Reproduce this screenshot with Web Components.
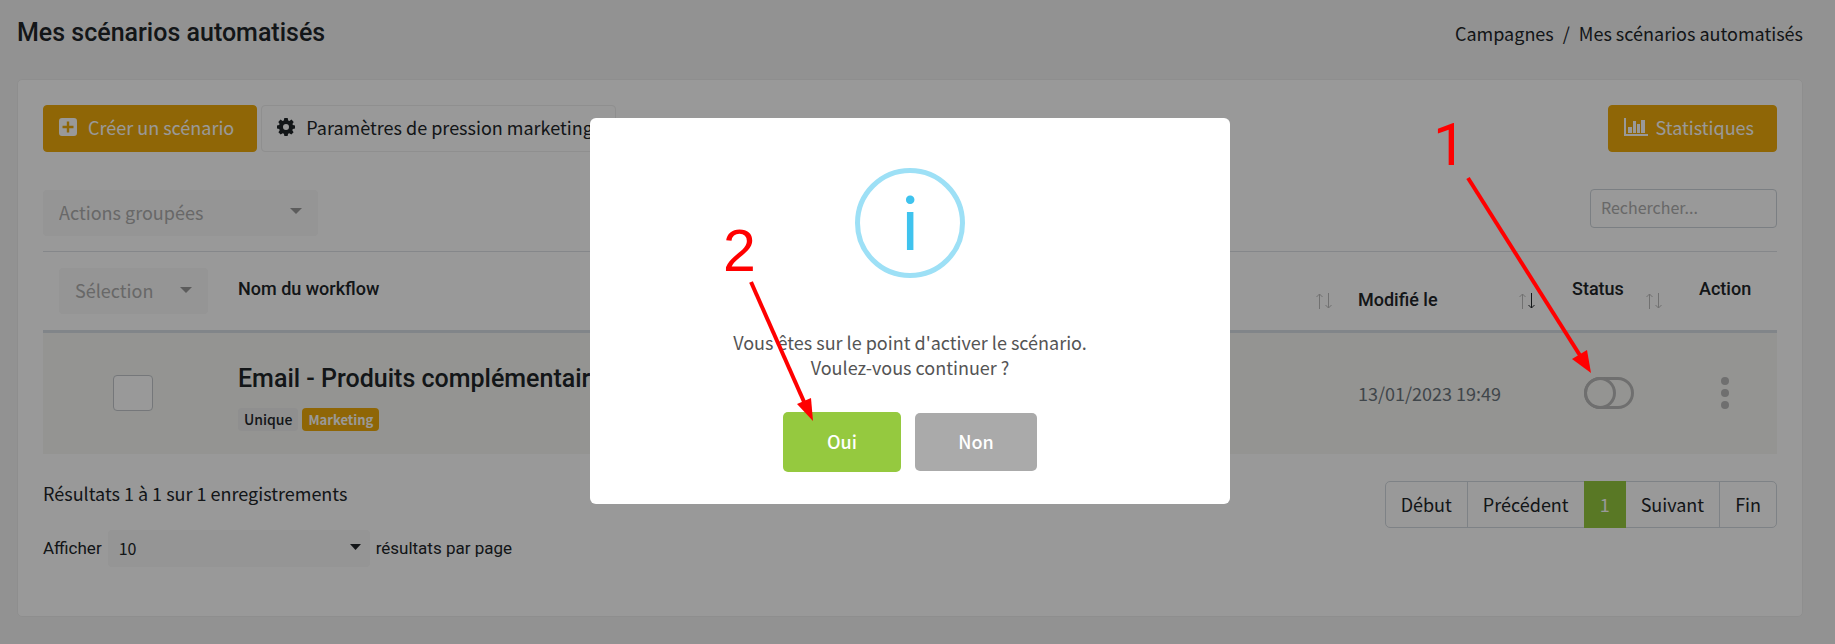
<!DOCTYPE html>
<html lang="fr">
<head>
<meta charset="utf-8">
<title>Mes scénarios automatisés</title>
<style>
  html { background: #f4f4f4; }
  body {
    margin: 0;
    color: #212529;
    font: 18px/26px "Noto Sans CJK SC", "Noto Sans", sans-serif;
  }
</style>
</head>
<body>
<scenario-page></scenario-page>
<confirm-dialog>
  <p>Vous êtes sur le point d'activer le scénario.<br>Voulez-vous continuer ?</p>
  <step-marker slot="marker" class="two" step="2"></step-marker>
</confirm-dialog>
<step-layer></step-layer>

<script>
const reset = `
  * { box-sizing: border-box; }
  button, input, select { font: inherit; color: inherit; margin: 0; }
  svg { display: block; fill: currentColor; }
`;

function define(name, html) {
  customElements.define(name, class extends HTMLElement {
    connectedCallback() {
      this.attachShadow({ mode: 'open' });
      this.shadowRoot.innerHTML = `<style>${reset}</style>` +
        (typeof html === 'function' ? html(this) : html);
    }
  });
}

const icons = {
  plus: `<svg width="18" height="18" viewBox="0 0 18 18"><path fill-rule="evenodd" d="M3 0H15A3 3 0 0 1 18 3V15A3 3 0 0 1 15 18H3A3 3 0 0 1 0 15V3A3 3 0 0 1 3 0ZM7.800 3.500V7.800H3.500V10.200H7.800V14.500H10.200V10.200H14.500V7.800H10.200V3.500Z"/></svg>`,
  cog: `<svg width="18" height="18" viewBox="0 0 18 18"><path fill-rule="evenodd" d="M7.300 0H10.700L11.200 2.400L12.400 2.900L14.500 1.600L16.700 3.900L15.400 5.900L15.900 7.100L18 7.500V10.600L15.800 11L15.300 12.200L16.600 14.200L14.300 16.500L12.300 15.200L11.100 15.700L10.600 18H7.400L6.900 15.700L5.700 15.200L3.700 16.500L1.400 14.200L2.700 12.200L2.200 11L0 10.600V7.500L2.100 7.100L2.600 5.900L1.300 3.900L3.500 1.600L5.600 2.900L6.800 2.400ZM9 6A3 3 0 1 0 9 12A3 3 0 1 0 9 6Z"/></svg>`,
  chart: `<svg width="24" height="18" viewBox="0 0 24 18"><path d="M0 0H2V16H24V18H0ZM4 9H8V15H4ZM9 3H12V15H9ZM13 6H16V15H13ZM17 2H21V15H17Z"/></svg>`
};

define('icon-button', el => `
  <style>
    :host { display: block; }
    button {
      display: flex;
      align-items: center;
      gap: 11px;
      height: 47px;
      padding: 0 22px 3px 15px;
      border: 1px solid #eee;
      border-radius: 4px;
      background: none;
      white-space: nowrap;
    }
    :host([primary]) button { background: #efab0a; border-color: #efab0a; color: #fff; }
    :host([tight]) button { gap: 8px; }
  </style>
  <button type="button">${icons[el.getAttribute('icon')]}<slot></slot></button>
`);

define('pick-list', el => `
  <style>
    :host { display: grid; align-items: center; border-radius: 4px; background: #f8f8f8; color: #adadad; }
    select, svg { grid-area: 1 / 1; }
    select {
      appearance: none;
      width: 100%;
      height: 46px;
      padding: 0 16px 2px;
      border: 0;
      background: none;
    }
    svg { justify-self: end; margin: 0 16px 3px 0; color: #999; pointer-events: none; }
    :host([compact]) { color: #212529; font-size: 16px; }
    :host([compact]) select { height: 37px; padding: 0 11px; }
    :host([compact]) svg { margin: 0 9px 2px 0; color: #212529; width: 11px; }
  </style>
  <select aria-label="${el.getAttribute('label')}"><option>${el.getAttribute('value')}</option></select>
  <svg width="12" height="6" viewBox="0 0 12 6" preserveAspectRatio="none"><path d="M0 0H12L6 6Z"/></svg>
`);

define('sort-arrows', `
  <style>
    :host { display: block; }
    svg { fill: none; stroke: #bcbcbc; stroke-width: 1; }
    :host([desc]) .down { stroke: #212529; }
  </style>
  <svg width="17" height="16" viewBox="0 0 17 16">
    <path d="M3.500 16V1M0.500 4L3.500 1L6.500 4"/>
    <path class="down" d="M12.500 0V15M9.500 12L12.500 15L15.500 12"/>
  </svg>
`);

define('page-header', `
  <style>
    :host { display: flex; justify-content: space-between; align-items: center; }
    h1 { margin: 0; font: 500 25px/32px Roboto, sans-serif; }
    nav { display: flex; gap: 9px; }
    a { color: inherit; text-decoration: none; }
  </style>
  <h1>Mes scénarios automatisés</h1>
  <nav aria-label="Fil d'Ariane">
    <a href="#campagnes">Campagnes</a><span>/</span><a href="#scenarios">Mes scénarios automatisés</a>
  </nav>
`);

define('scenario-table', `
  <style>
    :host { display: block; }
    table { width: 100%; border-collapse: collapse; table-layout: fixed; }
    th {
      height: 80px;
      padding: 16px;
      border-top: 1px solid #dee2e6;
      border-bottom: 3px solid #d8dee4;
      font: 500 18px/20px Roboto, sans-serif;
      text-align: left;
      vertical-align: top;
    }
    td { height: 122px; padding: 0 16px; background: #f7f7f3; color: #6c757d; }
    th.select { width: 179px; padding-right: 14px; }
    th.spacer { padding-right: 9px; }
    th.date { width: 214px; padding-right: 20px; }
    th.status { width: 127px; padding-right: 20px; }
    th.action { width: 94px; }
    pick-list { font: 18px/26px "Noto Sans CJK SC", sans-serif; }
    .cell { display: flex; justify-content: space-between; padding-top: 11px; }
    .cell sort-arrows { padding-top: 14px; }
    .date .cell { padding-top: 22px; }
    .date sort-arrows { padding-top: 3px; }
    .spacer .cell { justify-content: flex-end; }
    .label { padding-top: 11px; }
    .tick {
      display: block;
      appearance: none;
      width: 40px;
      height: 36px;
      margin: 0 auto;
      border: 1px solid #c3c7cb;
      border-radius: 4px;
      background: #fff;
    }
    h2 { margin: 7px 0 13px; color: #212529; font: 500 25px/32px Roboto, sans-serif; white-space: nowrap; }
    .tags { display: flex; gap: 4px; }
    .tag { padding: 0 6px; border-radius: 4px; background: #eee; color: #212529; font-size: 14px; line-height: 23px; font-weight: 500; }
    .tag.hot { background: #efab0a; color: #fff; font-size: 13px; font-weight: 700; }
    .icon { display: block; padding: 0; border: 0; background: none; color: #b9b9b9; }
    .toggle { margin-left: 12px; }
    .dots { margin-left: 22px; }
  </style>
  <table>
    <thead>
      <tr>
        <th class="select" scope="col"><pick-list label="Sélection" value="Sélection"></pick-list></th>
        <th scope="col"><div class="label">Nom du workflow</div></th>
        <th class="spacer" scope="col"><div class="cell"><sort-arrows></sort-arrows></div></th>
        <th class="date" scope="col"><div class="cell">Modifié le<sort-arrows desc></sort-arrows></div></th>
        <th class="status" scope="col"><div class="cell">Status<sort-arrows></sort-arrows></div></th>
        <th class="action" scope="col"><div class="label">Action</div></th>
      </tr>
    </thead>
    <tbody>
      <tr>
        <td><input class="tick" type="checkbox" aria-label="Sélectionner le scénario"></td>
        <td colspan="2">
          <h2>Email - Produits complémentaires</h2>
          <div class="tags"><span class="tag">Unique</span><span class="tag hot">Marketing</span></div>
        </td>
        <td>13/01/2023 19:49</td>
        <td>
          <button class="icon toggle" type="button" aria-label="Activer">
            <svg width="50" height="32" viewBox="0 0 50 32" stroke="currentColor" stroke-width="3" style="fill:none"><rect x="1.500" y="1.500" width="47" height="29" rx="14.500"/><circle cx="16" cy="16" r="14.500"/></svg>
          </button>
        </td>
        <td>
          <button class="icon dots" type="button" aria-label="Actions">
            <svg width="8" height="32" viewBox="0 0 8 32"><circle cx="4" cy="4" r="4"/><circle cx="4" cy="16" r="4"/><circle cx="4" cy="28" r="4"/></svg>
          </button>
        </td>
      </tr>
    </tbody>
  </table>
`);

define('page-nav', `
  <style>
    :host { display: flex; border: 1px solid #d3d9df; border-radius: 5px; }
    a { padding: 10px 15px; line-height: 25px; color: inherit; text-decoration: none; }
    a + a { border-left: 1px solid #d3d9df; }
    a.on, a.on + a { border-left: 0; }
    a.on { margin: -1px 0; padding: 11px 16px; background: #95c93f; color: #fff; }
  </style>
  <a href="#debut">Début</a><a href="#precedent">Précédent</a><a class="on" href="#1" aria-current="page">1</a><a href="#suivant">Suivant</a><a href="#fin">Fin</a>
`);

define('scenario-page', `
  <style>
    :host { display: block; padding: 17px 32px 26px 17px; }
    .card { margin: 30px 0 0; padding: 25px 25px 49px; border: 1px solid #ededed; border-radius: 5px; background: #fff; }
    .row { display: flex; justify-content: space-between; align-items: center; }
    .buttons { display: flex; gap: 4px; }
    .filters { margin: 37px 0 15px; }
    .filters pick-list { width: 275px; }
    .search {
      width: 187px;
      height: 39px;
      margin-bottom: 8px;
      padding: 0 10px 3px;
      border: 1px solid #ced4da;
      border-radius: 4px;
      background: none;
      font-size: 16px;
    }
    .search::placeholder { color: #adadad; opacity: 1; }
    .foot { align-items: flex-start; margin-top: 27px; }
    .count { line-height: 24px; }
    .length { display: flex; align-items: center; gap: 6px; margin-top: 25px; font: 17px/20px Roboto, sans-serif; }
    .length pick-list { width: 262px; font-family: "Noto Sans CJK SC", sans-serif; }
  </style>
  <page-header></page-header>
  <main class="card">
    <div class="row">
      <div class="buttons">
        <icon-button primary icon="plus">Créer un scénario</icon-button>
        <icon-button icon="cog">Paramètres de pression marketing</icon-button>
      </div>
      <icon-button primary tight icon="chart">Statistiques</icon-button>
    </div>
    <div class="row filters">
      <pick-list label="Actions groupées" value="Actions groupées"></pick-list>
      <input class="search" type="search" placeholder="Rechercher..." aria-label="Rechercher">
    </div>
    <scenario-table></scenario-table>
    <div class="row foot">
      <div>
        <div class="count">Résultats 1 à 1 sur 1 enregistrements</div>
        <div class="length"><span>Afficher</span><pick-list compact label="Résultats par page" value="10"></pick-list><span>résultats par page</span></div>
      </div>
      <page-nav></page-nav>
    </div>
  </main>
`);

define('confirm-dialog', `
  <style>
    :host {
      position: fixed;
      inset: 0;
      display: flex;
      align-items: center;
      justify-content: center;
      padding: 0 15px 22px 0;
      background: rgba(0, 0, 0, .4);
    }
    .box {
      position: relative;
      display: flex;
      flex-direction: column;
      align-items: center;
      width: 640px;
      padding: 50px 20px 32px;
      border-radius: 6px;
      background: #fff;
      color: #545454;
      text-align: center;
    }
    .info {
      width: 110px;
      height: 110px;
      border: 5px solid #9de0f6;
      border-radius: 50%;
      color: #3fc3ee;
      font-size: 70px;
      line-height: 94px;
    }
    .text { margin: 52px 0 32px; line-height: 25px; }
    ::slotted(p) { margin: 0; }
    .actions { display: flex; align-items: center; gap: 14px; }
    button { width: 122px; height: 58px; padding-bottom: 3px; border: 0; border-radius: 5px; background: #aaa; color: #fff; font-size: 18px; font-weight: 500; }
    button.yes { width: 118px; height: 60px; background: #95c93f; }
  </style>
  <div class="box" role="dialog" aria-modal="true">
    <div class="info">i</div>
    <div class="text"><slot></slot></div>
    <div class="actions"><button class="yes" type="button">Oui</button><button type="button">Non</button></div>
    <slot name="marker"></slot>
  </div>
`);

// Numbered red arrows that lie over the page
const arrows = {
  1: `<svg width="160" height="260" viewBox="1435 118 160 260"><text x="1433" y="165" style="font-family:Roboto,sans-serif">1</text><path class="line" d="M1468 178L1581 357"/><path d="M1591 373L1572 359L1587 350Z"/></svg>`,
  2: `<svg width="100" height="200" viewBox="720 225 100 200"><text x="723" y="272">2</text><path class="line" d="M751 283L805 405"/><path d="M813 422L797 405L811 399Z"/></svg>`
};

define('step-marker', el => `
  <style>
    :host { position: absolute; color: #f00; pointer-events: none; }
    :host(.one) { top: 118px; right: 240px; }
    :host(.two) { top: 106px; left: 130px; }
    svg { overflow: visible; }
    text { font: 59px "Liberation Sans", sans-serif; }
    .line { stroke: currentColor; stroke-width: 4; }
  </style>
  ${arrows[el.getAttribute('step')]}
`);

define('step-layer', `
  <style>:host { position: fixed; inset: 0; pointer-events: none; }</style>
  <step-marker class="one" step="1"></step-marker>
`);
</script>
</body>
</html>
